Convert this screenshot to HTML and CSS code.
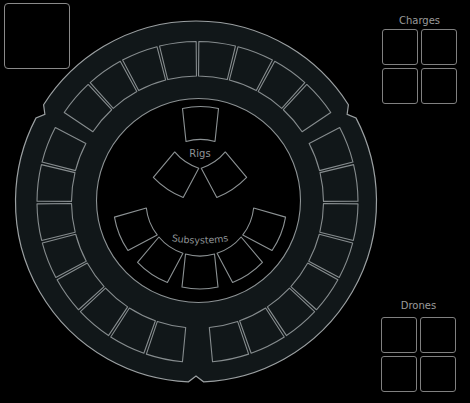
FILE: index.html
```html
<!DOCTYPE html>
<html lang="en">
<head>
  <meta charset="UTF-8">
  <title>Fitting</title>
  <link rel="stylesheet" href="styles.css">
</head>
<body>

  <div class="window">
    <div class="fitting">
      <svg class="ring" width="381" height="403" viewBox="0 0 381 403">
        <defs>
          <!-- one slot of the outer ring, drawn at the top, rotated into place -->
          <path id="slot" d="M -18.45 -159.44 A 160.5 160.5 0 0 1 18.45 -159.44 L 14.48 -125.16 A 126 126 0 0 0 -14.48 -125.16 Z"/>
          <!-- rig / subsystem tile, outer edge up -->
          <path id="tile" d="M -18 -16.5 A 85 85 0 0 1 18 -16.5 L 14.5 16.5 A 52 52 0 0 0 -14.5 16.5 Z"/>
          <path id="subs-arc" d="M 160 238.4 A 157 157 0 0 0 240 238.4"/>
        </defs>

        <g transform="translate(196 201.5)">
          <path class="hull" d="M -7.56 180.34 A 180.5 180.5 0 0 1 -159.96 -83.63 L -151.12 -87.25 L -152.4 -96.72 A 180.5 180.5 0 0 1 152.4 -96.72 L 151.12 -87.25 L 159.96 -83.63 A 180.5 180.5 0 0 1 7.56 180.34 L 0 174.5 Z"/>
        </g>
        <circle class="core" cx="198.5" cy="200.5" r="102"/>

        <g class="slots" transform="translate(197.5 202)">
          <!-- high slots -->
          <use href="#slot" transform="rotate(-49.525)"/>
          <use href="#slot" transform="rotate(-35.375)"/>
          <use href="#slot" transform="rotate(-21.225)"/>
          <use href="#slot" transform="rotate(-7.075)"/>
          <use href="#slot" transform="rotate(7.075)"/>
          <use href="#slot" transform="rotate(21.225)"/>
          <use href="#slot" transform="rotate(35.375)"/>
          <use href="#slot" transform="rotate(49.525)"/>
          <!-- mid slots -->
          <use href="#slot" transform="rotate(68.975)"/>
          <use href="#slot" transform="rotate(83.125)"/>
          <use href="#slot" transform="rotate(97.275)"/>
          <use href="#slot" transform="rotate(111.425)"/>
          <use href="#slot" transform="rotate(125.575)"/>
          <use href="#slot" transform="rotate(139.725)"/>
          <use href="#slot" transform="rotate(153.875)"/>
          <use href="#slot" transform="rotate(168.025)"/>
          <!-- low slots -->
          <use href="#slot" transform="rotate(-68.975)"/>
          <use href="#slot" transform="rotate(-83.125)"/>
          <use href="#slot" transform="rotate(-97.275)"/>
          <use href="#slot" transform="rotate(-111.425)"/>
          <use href="#slot" transform="rotate(-125.575)"/>
          <use href="#slot" transform="rotate(-139.725)"/>
          <use href="#slot" transform="rotate(-153.875)"/>
          <use href="#slot" transform="rotate(-168.025)"/>
        </g>

        <g class="tiles">
          <!-- rigs -->
          <use href="#tile" transform="translate(200.5 125)"/>
          <use href="#tile" transform="translate(177.5 173.75) rotate(214)"/>
          <use href="#tile" transform="translate(222.5 173.75) rotate(146)"/>
          <!-- subsystems -->
          <g transform="translate(200 202)">
            <use href="#tile" transform="rotate(112) translate(0 -68.5)"/>
            <use href="#tile" transform="rotate(146) translate(0 -68.5)"/>
            <use href="#tile" transform="rotate(180) translate(0 -68.5)"/>
            <use href="#tile" transform="rotate(214) translate(0 -68.5)"/>
            <use href="#tile" transform="rotate(248) translate(0 -68.5)"/>
          </g>
        </g>

        <text class="label" x="200" y="157" text-anchor="middle">Rigs</text>
        <text class="label label-subs"><textPath href="#subs-arc" startOffset="50%" text-anchor="middle">Subsystems</textPath></text>
      </svg>
      <div class="ship-slot"></div>
    </div>

    <div class="side">
      <div class="bay bay-charges">
        <div class="bay-title">Charges</div>
        <div class="bay-grid">
          <div class="cell"></div>
          <div class="cell"></div>
          <div class="cell"></div>
          <div class="cell"></div>
        </div>
      </div>
      <div class="bay bay-drones">
        <div class="bay-title">Drones</div>
        <div class="bay-grid">
          <div class="cell"></div>
          <div class="cell"></div>
          <div class="cell"></div>
          <div class="cell"></div>
        </div>
      </div>
    </div>
  </div>

</body>
</html>
```

FILE: styles.css
```css
body {
  margin: 0;
  background: #000000;
  font-family: 'DejaVu Sans', Verdana, sans-serif;
}

.window {
  display: flex;
  width: 470px;
  height: 403px;
}

.fitting {
  display: grid;
  width: 381px;
}

.ring, .ship-slot {
  grid-area: 1 / 1;
}

.ring {
  display: block;
}

.ship-slot {
  align-self: start;
  justify-self: start;
  width: 66px;
  height: 66px;
  margin: 3px 0 0 4px;
  box-sizing: border-box;
  border: 1px solid #8a8a8a;
  border-radius: 4px;
}

.hull {
  fill: #111719;
  stroke: #9ba0a2;
  stroke-width: 1.2;
}

.core {
  fill: #000000;
  stroke: #8c9294;
  stroke-width: 1.1;
}

.slots {
  fill: none;
  stroke: #868c8e;
  stroke-width: 1.1;
  stroke-linejoin: round;
}

.tiles {
  fill: none;
  stroke: #8c9294;
  stroke-width: 1.1;
  stroke-linejoin: round;
}

.label {
  fill: #8f9496;
  font-size: 10px;
  font-family: 'DejaVu Sans', Verdana, sans-serif;
}

.label-subs {
  font-size: 9.5px;
}

.side {
  width: 76px;
  display: flex;
  flex-direction: column;
  justify-content: space-between;
  padding: 15px 0 11px;
}

.bay {
  display: flex;
  flex-direction: column;
  align-items: center;
}

.bay-charges {
  align-self: flex-end;
}

.bay-drones {
  align-self: flex-start;
}

.bay-title {
  font-size: 10px;
  line-height: 12px;
  color: #9b9b9b;
  margin-bottom: 2px;
}

.bay-drones .bay-title {
  margin-bottom: 5px;
}

.bay-grid {
  display: grid;
  grid-template-columns: repeat(2, 36px);
  grid-auto-rows: 36px;
  gap: 3px;
}

.cell {
  box-sizing: border-box;
  border: 1px solid #808080;
  border-radius: 3px;
}
```
